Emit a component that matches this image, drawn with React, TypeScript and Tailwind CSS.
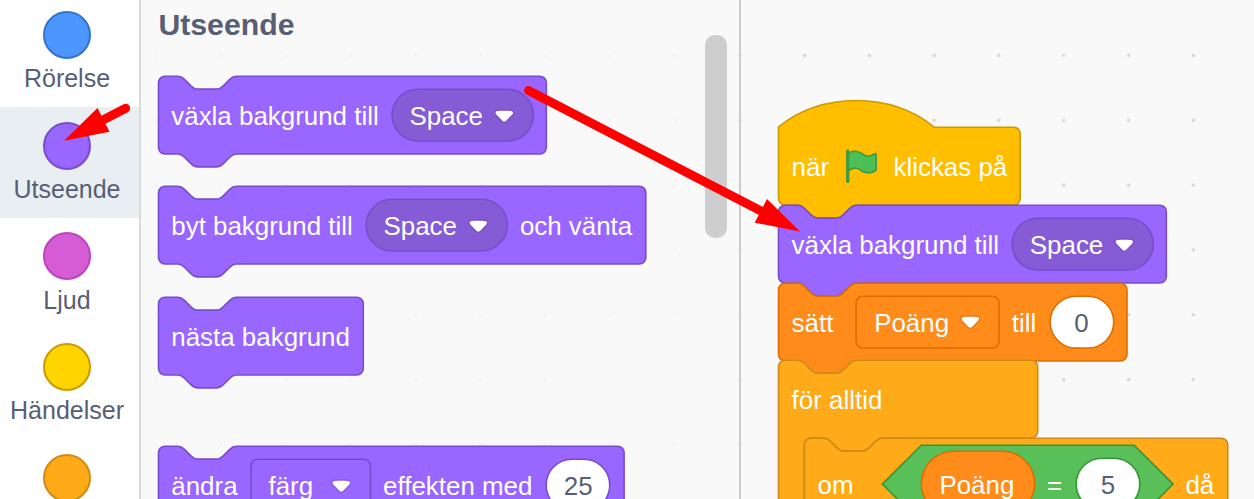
import type { ReactNode } from "react";

const UNIT = 1.62;

const NOTCH_RIGHT = "c 2,0 3,1 4,2 l 4,4 c 1,1 2,2 4,2 h 12 c 2,0 3,-1 4,-2 l 4,-4 c 1,-1 2,-2 4,-2";
const NOTCH_LEFT = "c -2,0 -3,1 -4,2 l -4,4 c -1,1 -2,2 -4,2 h -12 c -2,0 -3,-1 -4,-2 l -4,-4 c -1,-1 -2,-2 -4,-2";

const PALETTE = {
  looks: { fill: "#9966FF", stroke: "#774DCB" },
  looksDark: { fill: "#855CD6", stroke: "#774DCB" },
  events: { fill: "#FFBF00", stroke: "#CC9900" },
  data: { fill: "#FF8C1A", stroke: "#DB6E00" },
  control: { fill: "#FFAB19", stroke: "#CF8B17" },
  operators: { fill: "#59C059", stroke: "#389438" },
};
type Tone = keyof typeof PALETTE;

const bottom = `a 4,4 0 0,1 -4,4 H 48 ${NOTCH_LEFT} H 4 a 4,4 0 0,1 -4,-4 z`;
const stackPath = (w: number, h = 48) =>
  `M 0,4 A 4,4 0 0,1 4,0 H 12 ${NOTCH_RIGHT} H ${w - 4} a 4,4 0 0,1 4,4 V ${h - 4} ${bottom}`;
const hatPath = (w: number) =>
  `M 0,0 c 25,-22 71,-22 96,0 H ${w - 4} a 4,4 0 0,1 4,4 V 44 ${bottom}`;
const foreverPath = (w: number) =>
  `M 0,4 A 4,4 0 0,1 4,0 H 12 ${NOTCH_RIGHT} H ${w - 4} a 4,4 0 0,1 4,4 V 44 a 4,4 0 0,1 -4,4 H 64 ${NOTCH_LEFT} H 20 a 4,4 0 0,0 -4,4 V 100 H 0 z`;
const roundPath = (w: number, h: number, r: number) =>
  `M ${r},0 H ${w - r} a ${r},${r} 0 0 1 ${r},${r} V ${h - r} a ${r},${r} 0 0 1 ${-r},${r} H ${r} a ${r},${r} 0 0 1 ${-r},${-r} V ${r} a ${r},${r} 0 0 1 ${r},${-r} z`;
const hexPath = (w: number) => `M 24,0 H ${w - 24} L ${w},24 L ${w - 24},48 H 24 L 0,24 z`;

function Shape({ d, fill, stroke, dx = 0.1 }: { d: string; fill: string; stroke: string; dx?: number }) {
  return (
    <svg className="absolute left-0 top-0 h-px w-px overflow-visible" aria-hidden="true">
      <path d={d} transform={`translate(${dx} 0.2) scale(${UNIT})`} fill={fill} stroke={stroke} strokeWidth={1} />
    </svg>
  );
}

function Block({ tone, d, children }: { tone: Tone; d: string; children: ReactNode }) {
  return (
    <div className="relative h-[77.76px] shrink-0">
      <Shape d={d} dx={0.5} {...PALETTE[tone]} />
      <div className="relative flex h-full items-center gap-[13px] pl-[13.3px]">{children}</div>
    </div>
  );
}

function Label({ children, className = "" }: { children: ReactNode; className?: string }) {
  return <span className={`relative top-[1.1px] shrink-0 ${className}`}>{children}</span>;
}

function Arrow() {
  return (
    <svg className="relative top-px ml-auto mr-[18.6px] h-[14.24px] w-[20.59px] shrink-0" viewBox="0 0 12.71 8.79">
      <path
        fill="#231f20"
        opacity="0.1"
        d="M12.71,2.44A2.41,2.41,0,0,1,12,4.16L8.08,8.08a2.45,2.45,0,0,1-3.45,0L0.72,4.16A2.42,2.42,0,0,1,0,2.44,2.48,2.48,0,0,1,.71.71C1,0.47,1.43,0,6.36,0S11.75,0.46,12,.71A2.44,2.44,0,0,1,12.71,2.44Z"
      />
      <path
        fill="#fff"
        d="M6.36,7.79a1.43,1.43,0,0,1-1-.42L1.42,3.45a1.44,1.44,0,0,1,0-2c0.56-.56,9.31-0.56,9.87,0a1.44,1.44,0,0,1,0,2L7.37,7.37A1.43,1.43,0,0,1,6.36,7.79Z"
      />
    </svg>
  );
}

function Pill() {
  return (
    <div className="relative flex h-[51.84px] w-[141.2px] shrink-0 items-center pl-[17.8px]">
      <Shape d={roundPath(87.2, 32, 16)} {...PALETTE.looksDark} />
      <Label>Space</Label>
      <Arrow />
    </div>
  );
}

function Dropdown({ tone, units, className, children }: { tone: Tone; units: number; className: string; children: ReactNode }) {
  return (
    <div className={`relative flex h-[51.84px] shrink-0 items-center pl-[17.8px] ${className}`}>
      <Shape d={roundPath(units, 32, 4)} {...PALETTE[tone]} />
      <Label>{children}</Label>
      <Arrow />
    </div>
  );
}

function NumberInput({ tone, value }: { tone: Tone; value: string }) {
  return (
    <div className="relative flex h-[51.84px] w-[63.6px] shrink-0 items-center justify-center text-[#575E75]">
      <Shape d={roundPath(39.3, 32, 16)} fill="#fff" stroke={PALETTE[tone].stroke} />
      <Label>{value}</Label>
    </div>
  );
}

function Flag() {
  return (
    <svg className="h-[38.88px] w-[38.88px] shrink-0" viewBox="0 0 24 24">
      <path
        fill="#45993D"
        d="M20.8,3.7c-0.4-0.2-0.9-0.1-1.2,0.2c-2,1.6-4.8,1.6-6.8,0c-2.3-1.9-5.6-2.3-8.3-1v-0.4c0-0.6-0.5-1-1-1s-1,0.4-1,1v18.8c0,0.5,0.5,1,1,1h0.1c0.5,0,1-0.5,1-1v-6.4c1-0.7,2.1-1.2,3.4-1.3c1.2,0,2.4,0.4,3.4,1.2c2.9,2.3,7,2.3,9.8,0c0.3-0.2,0.4-0.5,0.4-0.9V4.7C21.6,4.2,21.3,3.8,20.8,3.7z"
      />
      <path
        fill="#4CBF56"
        d="M20.5,13.9C18,15.9,14.4,15.9,11.9,13.9c-1.1-0.9-2.5-1.4-4-1.4c-1.2,0.1-2.3,0.5-3.4,1.1V4c2.5-1.4,5.5-1.1,7.7,0.6c2.4,1.9,5.7,1.9,8.1,0h0.2l0,0.1V13.9z"
      />
    </svg>
  );
}

const CATEGORIES = [
  { name: "Rörelse", dot: "bg-[#4C97FF] border-[#3373CC]" },
  { name: "Utseende", dot: "bg-[#9966FF] border-[#774DCB]", selected: true },
  { name: "Ljud", dot: "bg-[#D65CD6] border-[#BD42BD]" },
  { name: "Händelser", dot: "bg-[#FFD500] border-[#CC9900]" },
  { name: "", dot: "bg-[#FFAB19] border-[#CF8B17]" },
];

function Categories() {
  return (
    <nav className="w-[141px] shrink-0 border-r-2 border-[#D9D9D9] bg-white">
      <div className="-mt-[3.7px] flex flex-col">
        {CATEGORIES.map((c, i) => (
          <div
            key={i}
            className={`flex h-[110.7px] flex-col items-center pr-[5px] pt-[14.7px] ${c.selected ? "bg-[#E9EEF2]" : ""}`}
          >
            <div className={`size-12 shrink-0 rounded-full border-2 ${c.dot}`} />
            {c.name && <div className="mt-[4.2px] text-[25px] leading-[30px] text-[#575E75]">{c.name}</div>}
          </div>
        ))}
      </div>
    </nav>
  );
}

function Flyout() {
  return (
    <section className="flex w-[600px] shrink-0 justify-between border-r-2 border-[#CCCCCC] bg-[#F9F9F9]/80 pl-[17px]">
      <div className="flex flex-col">
        <h1 className="h-[76.2px] shrink-0 pl-[0.4px] pt-2 text-[30.24px] font-bold leading-[34px] text-[#575E75]">Utseende</h1>
        <div className="flex shrink-0 flex-col gap-[32.4px]">
          <Block tone="looks" d={stackPath(239.4)}>
            <Label className="w-[207.4px]">växla bakgrund till</Label>
            <Pill />
          </Block>
          <Block tone="looks" d={stackPath(300.8)}>
            <Label className="w-[181.4px]">byt bakgrund till</Label>
            <Pill />
            <Label>och vänta</Label>
          </Block>
          <div className="mt-[0.4px]">
            <Block tone="looks" d={stackPath(126.4)}>
              <Label>nästa bakgrund</Label>
            </Block>
          </div>
          <div className="mt-[38.9px]">
            <Block tone="looks" d={stackPath(287.4)}>
              <Label className="w-[66.4px]">ändra</Label>
              <Dropdown tone="looks" units={73.7} className="w-[119.4px]">färg</Dropdown>
              <Label className="w-[150.4px]">effekten med</Label>
              <NumberInput tone="looks" value="25" />
            </Block>
          </div>
        </div>
      </div>
      <div className="mr-3 mt-[35px] h-[203px] w-[22px] shrink-0 rounded-[10px] bg-[#CECECE]" />
    </section>
  );
}

function Script() {
  return (
    <section className="flex grow flex-col pl-[37.3px] pt-[127.1px]">
      <Block tone="events" d={hatPath(149.2)}>
        <Label className="w-[37px]">när</Label>
        <Flag />
        <Label>klickas på</Label>
      </Block>
      <Block tone="looks" d={stackPath(239.4)}>
        <Label className="w-[207.4px]">växla bakgrund till</Label>
        <Pill />
      </Block>
      <Block tone="data" d={stackPath(215.1)}>
        <Label className="w-[51.8px]">sätt</Label>
        <Dropdown tone="data" units={88.2} className="w-[142.4px]">Poäng</Dropdown>
        <Label className="w-[25px]">till</Label>
        <NumberInput tone="data" value="0" />
      </Block>
      <Block tone="control" d={foreverPath(160)}>
        <Label className="-mt-px">för alltid</Label>
      </Block>
      <div className="ml-[25.92px]">
        <div className="relative flex h-[90.7px] items-center gap-[13px] pl-[13.3px]">
          <Shape d={stackPath(261.3, 56)} dx={0.4} {...PALETTE.control} />
          <Label className="w-[51.3px]">om</Label>
          <div className="relative flex h-[77.76px] w-[290.6px] shrink-0 items-center gap-[13px] pl-[39px]">
            <Shape d={hexPath(179.4)} dx={0.4} {...PALETTE.operators} />
            <div className="relative flex h-[64.8px] w-[113.2px] shrink-0 items-center pl-[18.6px]">
              <Shape d={roundPath(69.9, 40, 20)} dx={0.4} {...PALETTE.data} />
              <Label>Poäng</Label>
            </div>
            <Label className="w-[16.2px]">=</Label>
            <NumberInput tone="operators" value="5" />
          </div>
          <Label>då</Label>
        </div>
      </div>
    </section>
  );
}

function Pointers() {
  return (
    <svg className="pointer-events-none absolute inset-0" width="1254" height="499" viewBox="0 0 1254 499">
      <g fill="#FF0000" stroke="#FF0000">
        <path d="M528.5,90.5 L765,213" strokeWidth="9" strokeLinecap="round" />
        <path d="M800,231.5 L767,199 L754.7,222.7 Z" stroke="none" />
        <path d="M125.7,108.3 L100,121.5" strokeWidth="9" strokeLinecap="round" />
        <path d="M64,140.7 L97.5,108 L109.5,131.7 Z" stroke="none" />
      </g>
    </svg>
  );
}

export default function App() {
  return (
    <main className="relative flex h-[499px] w-[1254px] overflow-hidden whitespace-nowrap bg-[#F9F9F9] font-['Liberation_Sans',Arial,sans-serif] text-[25.92px] leading-[30px] text-white">
      <Categories />
      <div className="flex grow bg-[radial-gradient(circle_at_32.4px_32.4px,#D6D6D6_1.3px,transparent_2.1px)] bg-[length:64.8px_64.8px] bg-[position:48px_23.1px]">
        <Flyout />
        <Script />
      </div>
      <Pointers />
    </main>
  );
}
